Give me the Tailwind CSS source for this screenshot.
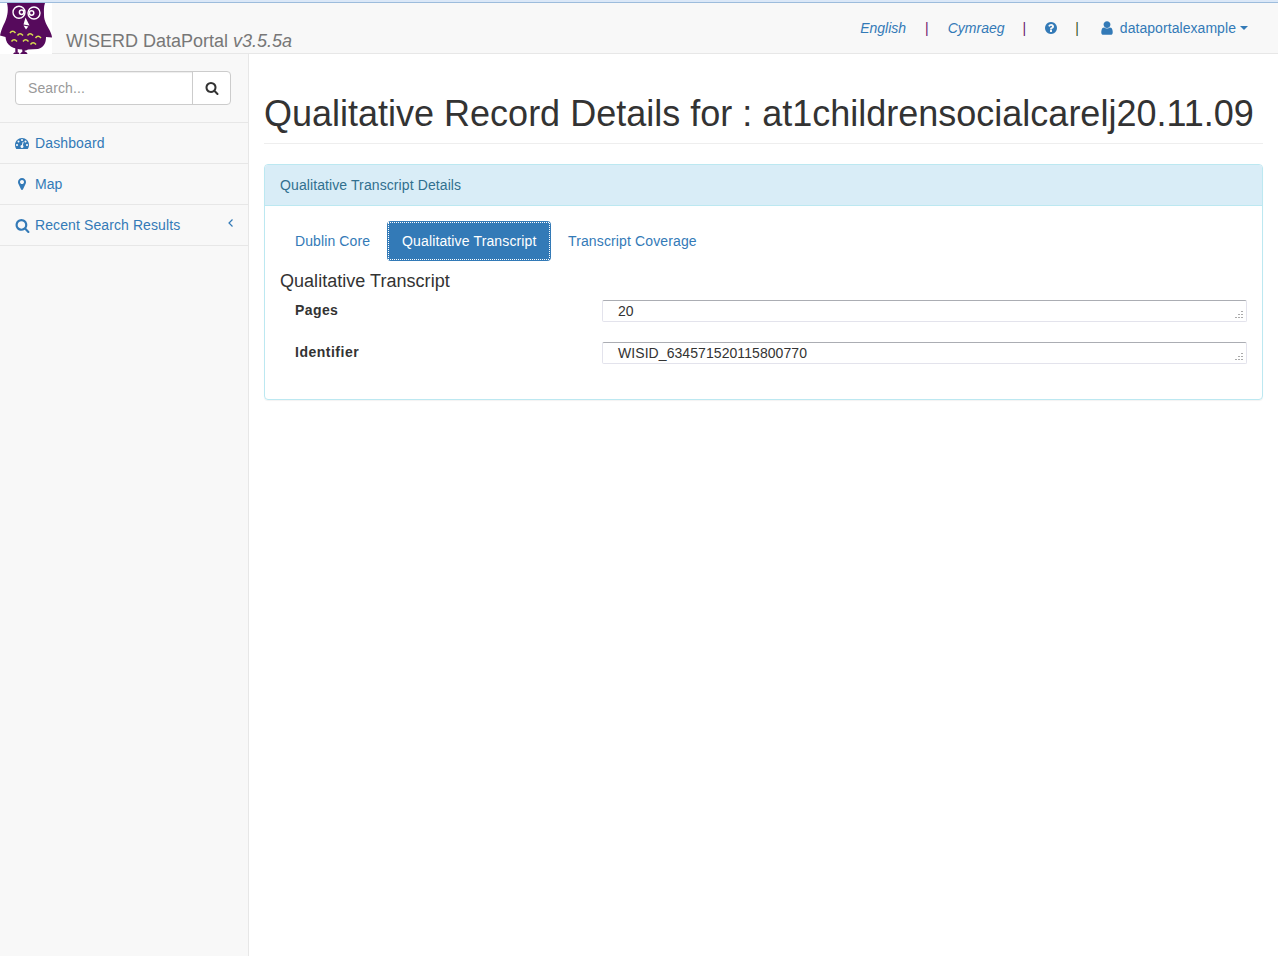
<!DOCTYPE html>
<html lang="en">
<head>
<meta charset="utf-8">
<title>WISERD DataPortal</title>
<script src="https://cdn.jsdelivr.net/npm/@tailwindcss/browser@4"></script>
</head>
<body class="h-[956px] flex flex-col overflow-hidden bg-white font-['Liberation_Sans',Arial,sans-serif] text-sm leading-5 text-[#333]">
<svg class="hidden">
  <symbol id="search" viewBox="0 0 1792 1792"><path d="M1216 832q0-185-131.5-316.5t-316.5-131.5-316.5 131.5-131.5 316.5 131.5 316.5 316.5 131.5 316.5-131.5 131.5-316.5zm512 832q0 52-38 90t-90 38q-54 0-90-38l-343-342q-179 124-399 124-143 0-273.5-55.5t-225-150-150-225-55.5-273.5 55.5-273.5 150-225 225-150 273.5-55.5 273.5 55.5 225 150 150 225 55.5 273.5q0 220-124 399l343 343q37 37 37 90z"/></symbol>
</svg>
<div class="h-[3px] shrink-0 bg-[#dbe8f8] border-b border-[#9dbcdc]"></div>
<header class="h-[51px] shrink-0 flex bg-[#f8f8f8] border-b border-[#e7e7e7]">
  <svg class="w-[52px] h-[51px] shrink-0" viewBox="0 0 52 51">
    <rect width="52" height="51" fill="#fff"/>
    <path d="M7 0H45C43.500 4 44 8 44 12C44 18 47 22 49.500 27C51 30 52 33 52 34.500L46 34C46 40 44 44 38 46L28 46.500L26 47.500H24L22 46.500C14 46 6 43 5.500 34L0 32.500C1 27 3 23 5 19C8 12 8.500 6 7 0Z" fill="#560a5c"/>
    <path d="M16.500 44v5M23.500 44v5" stroke="#560a5c" stroke-width="2.400"/>
    <path d="M13 51Q14 48.800 17 49Q19 49 19.500 51ZM20 51Q21 48.800 24 48.500Q27 48.500 27.500 51Z" fill="#560a5c"/>
    <circle cx="19" cy="9.300" r="6" fill="none" stroke="#fff" stroke-width="1.400"/>
    <circle cx="34" cy="10" r="6" fill="none" stroke="#fff" stroke-width="1.400"/>
    <circle cx="21.600" cy="9.300" r="2.200" fill="none" stroke="#fff" stroke-width="1.500"/>
    <circle cx="31.600" cy="10" r="2.200" fill="none" stroke="#fff" stroke-width="1.500"/>
    <path d="M25.500 14.500L29.500 22.500L23.500 21.500Z" fill="#fff"/><path d="M23.500 22.500L28.300 23.500L26 26.500Z" fill="#fff"/>
    <g fill="none" stroke="#d8de50" stroke-width="1.500"><path id="f" d="M10 30q2.500-3.500 5.500 0"/><use href="#f" x="7.500" y="2.500"/><use href="#f" x="17.500" y="2.500"/><use href="#f" x="25.500" y="5"/><use href="#f" x="1.500" y="8.500"/><use href="#f" x="13" y="8.500"/><use href="#f" x="20.500" y="11.500"/></g>
  </svg>
  <div class="pl-3.5 pt-7 text-lg leading-5 text-[#777] whitespace-nowrap">WISERD DataPortal <i>v3.5.5a</i></div>
  <nav class="ml-auto mr-[30px] h-[50px] flex items-center text-[#337ab7]">
    <i>English</i>
    <span class="ml-[19px] text-[#6b1a6f]">|</span>
    <i class="ml-[19px]">Cymraeg</i>
    <span class="ml-[18px] text-[#6b1a6f]">|</span>
    <svg class="ml-[18px] size-3.5" viewBox="0 0 1792 1792" fill="currentColor"><path d="M1024 1376v-192q0-14-9-23t-23-9h-192q-14 0-23 9t-9 23v192q0 14 9 23t23 9h192q14 0 23-9t9-23zm256-672q0-88-55.5-163t-138.5-116-170-41q-243 0-371 213-15 24 8 42l132 100q7 6 19 6 16 0 25-12 53-68 86-92 34-24 86-24 48 0 85.500 26t37.500 59q0 38-20 61t-68 45q-63 28-115.500 86.500t-52.500 125.500v36q0 14 9 23t23 9h192q14 0 23-9t9-23q0-19 21.500-49.500t54.500-49.500q32-18 49-28.500t46-35 44.500-48 28-60.500 12.500-81zm384 192q0 209-103 385.500t-279.500 279.500-385.500 103-385.500-103-279.500-279.500-103-385.500 103-385.500 279.500-279.500 385.500-103 385.500 103 279.500 279.500 103 385.500z"/></svg>
    <span class="ml-[17px] text-[#3a5a2a]">|</span>
    <svg class="ml-5 mr-[-1px] size-4" viewBox="0 0 1792 1792" fill="currentColor"><path d="M1536 1399q0 109-62.500 187t-150.500 78h-854q-88 0-150.500-78t-62.500-187q0-85 8.500-160.500t31.500-152 58.500-131 94-89 134.500-34.500q131 128 313 128t313-128q76 0 134.500 34.500t94 89 58.500 131 31.500 152 8.500 160.500zm-256-887q0 159-112.500 271.500t-271.500 112.500-271.500-112.500-112.500-271.500 112.500-271.500 271.500-112.500 271.500 112.500 112.500 271.500z"/></svg>
    <span class="ml-1.5 tracking-[0.06px]">dataportalexample</span>
    <svg class="ml-1 w-2 h-1" viewBox="0 0 8 4" fill="currentColor"><path d="M0 0h8L4 4z"/></svg>
  </nav>
</header>
<div class="flex flex-1">
  <aside class="w-[249px] shrink-0 bg-[#f8f8f8] border-r border-[#e7e7e7]">
    <div class="h-[69px] pt-[17px] pl-[15px] border-b border-[#e7e7e7]">
      <div class="w-[216px] h-[34px] flex rounded border border-[#ccc] bg-white overflow-hidden">
        <div class="w-[177px] border-r border-[#ccc] px-3 py-1.5 text-[#999] tracking-[0.1px] shadow-[inset_0_1px_1px_rgba(0,0,0,0.075)]">Search...</div>
        <div class="flex-1 flex items-center justify-center"><svg class="size-3.5" fill="currentColor"><use href="#search"/></svg></div>
      </div>
    </div>
    <a class="h-[41px] flex items-center px-[15px] border-b border-[#e7e7e7] text-[#337ab7] tracking-[0.13px]">
      <svg class="size-3.5 mr-1.5" viewBox="0 0 1792 1792" fill="currentColor"><path d="M384 1152q0-53-37.500-90.500t-90.500-37.500-90.500 37.500-37.500 90.500 37.500 90.500 90.500 37.500 90.500-37.500 37.500-90.500zm192-448q0-53-37.500-90.500t-90.500-37.500-90.500 37.500-37.500 90.500 37.500 90.500 90.500 37.500 90.500-37.500 37.500-90.500zm428 481l101-382q6-26-7.500-48.500t-38.500-29.500-48 6.500-30 39.500l-101 382q-60 5-107 43.500t-63 98.500q-20 77 20 146t117 89 146-20 89-117q16-60-6-117t-72-91zm660-33q0-53-37.500-90.500t-90.500-37.500-90.500 37.500-37.500 90.500 37.500 90.500 90.500 37.500 90.500-37.500 37.500-90.500zm-640-640q0-53-37.500-90.500t-90.500-37.500-90.500 37.500-37.500 90.500 37.500 90.500 90.500 37.500 90.500-37.500 37.500-90.500zm448 192q0-53-37.500-90.500t-90.500-37.500-90.500 37.500-37.500 90.500 37.500 90.500 90.500 37.500 90.500-37.500 37.500-90.500zm320 448q0 261-141 483-19 29-54 29h-1402q-35 0-54-29-141-221-141-483 0-182 71-348t191-286 286-191 348-71 348 71 286 191 191 286 71 348z"/></svg>Dashboard
    </a>
    <a class="h-[41px] flex items-center px-[15px] border-b border-[#e7e7e7] text-[#337ab7]">
      <svg class="size-3.5 mr-1.5" viewBox="0 0 1792 1792" fill="currentColor"><path d="M1152 640q0-106-75-181t-181-75-181 75-75 181 75 181 181 75 181-75 75-181zm256 0q0 109-33 179l-364 774q-16 33-47.500 52t-67.500 19-67.500-19-46.500-52l-365-774q-33-70-33-179 0-212 150-362t362-150 362 150 150 362z"/></svg>Map
    </a>
    <a class="h-[41px] flex items-center px-[15px] border-b border-[#e7e7e7] text-[#337ab7] tracking-[0.1px]">
      <svg class="size-[15px] mr-[5px]" fill="currentColor"><use href="#search"/></svg>Recent Search Results
      <svg class="ml-auto -mt-1 w-[5px] h-2" viewBox="0 0 5 8" fill="none" stroke="currentColor" stroke-width="1.200"><path d="M4.500 .5L1 4l3.500 3.500"/></svg>
    </a>
  </aside>
  <main class="flex-1 px-[15px] pt-10">
    <h1 class="h-[50px] border-b border-[#eee] text-4xl leading-[39.6px] whitespace-nowrap">Qualitative Record Details for : at1childrensocialcarelj20.11.09</h1>
    <section class="mt-5 h-[236px] rounded border border-[#bce8f1] shadow-[0_1px_1px_rgba(0,0,0,0.05)]">
      <div class="h-[41px] px-[15px] py-2.5 rounded-t-[3px] bg-[#d9edf7] border-b border-[#bce8f1] text-[#31708f] tracking-[0.1px]">Qualitative Transcript Details</div>
      <div class="px-[15px] pt-[15px]">
        <div class="flex gap-[2px] text-[#337ab7] whitespace-nowrap">
          <a class="w-[105px] px-[15px] py-2.5 tracking-[0.1px]">Dublin Core</a>
          <a class="relative w-[164px] px-[15px] py-2.5 rounded bg-[#337ab7] text-white tracking-[0.14px]"><svg class="absolute inset-0 size-full" fill="none" stroke="#fff" stroke-dasharray="1 1"><path d="M1 1.500H163M1 38.500H163M1.500 2V38M162.500 2V38"/></svg>Qualitative Transcript</a>
          <a class="px-[15px] py-2.5 tracking-[0.13px]">Transcript Coverage</a>
        </div>
        <h4 class="mt-2.5 text-lg leading-5 tracking-[0.03px]">Qualitative Transcript</h4>
        <div class="mt-[9px] pl-[15px] flex">
          <b class="w-[307px] tracking-[0.4px]">Pages</b>
          <div class="relative w-[645px] h-[22px] border border-[#e3e3ec] border-t-[#abadb3] rounded-[2px] pl-[15px]">20<svg class="absolute right-[3px] bottom-[2px] w-2 h-2" fill="#aaa" shape-rendering="crispEdges"><path id="grip" d="M6 0h2v1h-2zM6 3h2v1h-2zM3 3h2v1h-2zM6 6h2v1h-2zM3 6h2v1h-2zM0 6h2v1h-2z"/></svg></div>
        </div>
        <div class="mt-5 pl-[15px] flex">
          <b class="w-[307px] tracking-[0.5px]">Identifier</b>
          <div class="relative w-[645px] h-[22px] border border-[#e3e3ec] border-t-[#abadb3] rounded-[2px] pl-[15px] tracking-[0.07px]">WISID_634571520115800770<svg class="absolute right-[3px] bottom-[2px] w-2 h-2" fill="#aaa" shape-rendering="crispEdges"><use href="#grip"/></svg></div>
        </div>
      </div>
    </section>
  </main>
</div>
</body>
</html>
